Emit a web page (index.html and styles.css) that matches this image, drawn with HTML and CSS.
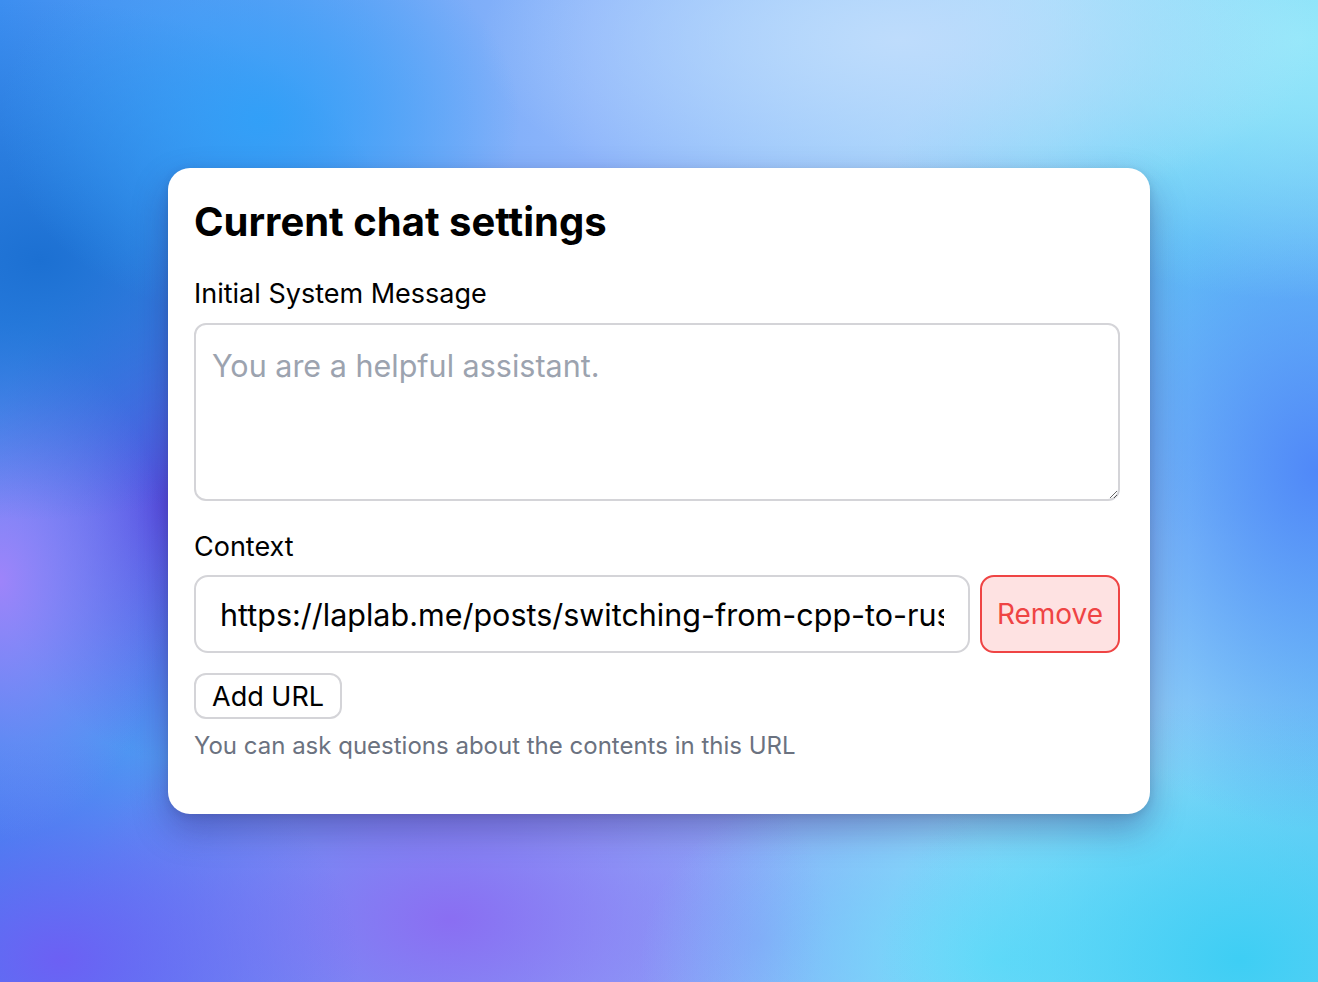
FILE: index.html
```html
<!DOCTYPE html>
<html lang="en">
<head>
<meta charset="utf-8">
<title>Current chat settings</title>
<link rel="stylesheet" href="styles.css">
</head>
<body>
<main class="stage">
  <section class="card">
    <h1 class="title">Current chat settings</h1>
    <label class="label" for="sys">Initial System Message</label>
    <textarea id="sys" class="textarea" placeholder="You are a helpful assistant."></textarea>
    <label class="label label-context" for="ctx">Context</label>
    <div class="url-row">
      <input id="ctx" class="url-input" type="text" value="https://laplab.me/posts/switching-from-cpp-to-rust">
      <button class="btn-remove" type="button">Remove</button>
    </div>
    <div class="add-row">
      <button class="btn-add" type="button">Add URL</button>
    </div>
    <p class="hint">You can ask questions about the contents in this URL</p>
  </section>
</main>
</body>
</html>
```
FILE: styles.css
```css
* { box-sizing: border-box; }

html, body {
  margin: 0;
  padding: 0;
  height: 100%;
}

body {
  font-family: Inter, "Noto Sans", "Liberation Sans", sans-serif;
  color: #000;
}

.stage {
  width: 100%;
  height: 100%;
  display: flex;
  align-items: center;
  justify-content: center;
  background-color: #7f8cf4;
  background-image:
    radial-gradient(ellipse 260px 200px at 260px 120px, rgba(48,160,248,0.95), rgba(48,160,248,0) 100%),
    radial-gradient(ellipse 360px 260px at 40px 260px, rgba(28,112,210,1), rgba(28,112,210,0) 100%),
    radial-gradient(ellipse 420px 180px at 900px 40px, rgba(190,220,252,1), rgba(190,220,252,0) 100%),
    radial-gradient(ellipse 380px 260px at 1300px 40px, rgba(150,232,250,1), rgba(150,232,250,0) 100%),
    radial-gradient(ellipse 300px 360px at 1318px 470px, rgba(80,136,248,1), rgba(80,136,248,0) 100%),
    radial-gradient(ellipse 320px 300px at 1200px 240px, rgba(96,200,246,1), rgba(96,200,246,0) 100%),
    radial-gradient(ellipse 360px 260px at 1240px 960px, rgba(62,206,244,1), rgba(62,206,244,0) 100%),
    radial-gradient(ellipse 360px 220px at 1000px 960px, rgba(110,222,250,1), rgba(110,222,250,0) 100%),
    radial-gradient(ellipse 170px 260px at 0px 580px, rgba(158,132,250,1), rgba(158,132,250,0) 100%),
    radial-gradient(ellipse 180px 260px at 170px 500px, rgba(88,78,226,1), rgba(88,78,226,0) 100%),
    radial-gradient(ellipse 300px 220px at 60px 960px, rgba(108,96,244,1), rgba(108,96,244,0) 100%),
    radial-gradient(ellipse 380px 240px at 450px 920px, rgba(138,110,242,1), rgba(138,110,242,0) 100%),
    radial-gradient(ellipse 260px 200px at 760px 940px, rgba(138,160,248,1), rgba(138,160,248,0) 100%),
    linear-gradient(90deg, #3c8ef0 0%, #8fb6fb 45%, #a6dcfb 80%, #7ad0f6 100%);
}

.card {
  width: 982px;
  height: 646px;
  background: #fff;
  border-radius: 22px;
  padding: 30px 30px 0 26px;
  box-shadow: 0 16px 34px rgba(40, 20, 100, 0.34), 0 2px 8px rgba(0, 0, 0, 0.1);
  display: flex;
  flex-direction: column;
  align-items: stretch;
}

.title {
  margin: 0;
  font-size: 40px;
  line-height: 48px;
  font-weight: 700;
  letter-spacing: 0;
  color: #000;
}

.label {
  display: block;
  margin-top: 31px;
  font-size: 27px;
  line-height: 34px;
  font-weight: 400;
  color: #000;
}

.label-context {
  margin-top: 29px;
}

.textarea {
  display: block;
  margin-top: 12px;
  width: 100%;
  height: 178px;
  border: 2px solid #d4d4d8;
  border-radius: 12px;
  padding: 22px 16px;
  font-family: inherit;
  font-size: 30.5px;
  line-height: 38px;
  color: #000;
  background: #fff;
  resize: vertical;
  outline: none;
}

.textarea::placeholder {
  color: #9ca3af;
}

.url-row {
  margin-top: 11px;
  display: flex;
  gap: 10px;
  height: 78px;
}

.url-input {
  flex: 1;
  min-width: 0;
  height: 78px;
  border: 2px solid #d4d4d8;
  border-radius: 14px;
  padding: 0 24px;
  font-family: inherit;
  font-size: 30.5px;
  color: #000;
  background: #fff;
  outline: none;
}

.btn-remove {
  width: 140px;
  height: 78px;
  border: 2px solid #ef4444;
  border-radius: 14px;
  background: #fee2e2;
  color: #ef4444;
  font-family: inherit;
  font-size: 28px;
  padding: 0;
}

.add-row {
  margin-top: 20px;
  display: flex;
}

.btn-add {
  height: 46px;
  padding: 0 16px;
  border: 2px solid #d4d4d8;
  border-radius: 12px;
  background: #fff;
  color: #000;
  font-family: inherit;
  font-size: 27px;
  line-height: 1;
}

.hint {
  margin: 12px 0 0;
  font-size: 24px;
  line-height: 30px;
  color: #6b7280;
}
```
